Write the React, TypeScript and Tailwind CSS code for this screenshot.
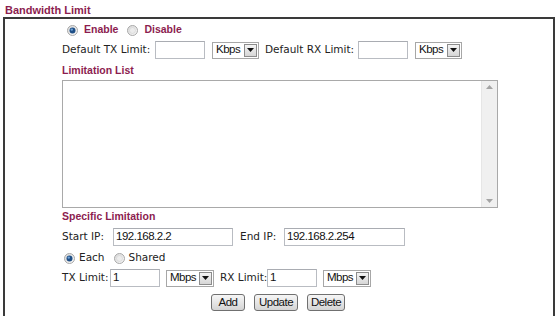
import React from "react";

const label = "shrink-0 whitespace-nowrap font-['DejaVu_Sans',sans-serif] text-[10.5px] text-[#222]";
const head = "shrink-0 whitespace-nowrap font-['Liberation_Sans',Arial,sans-serif] font-bold text-[10.5px] text-[#8c1d4f]";
const ctrl = "whitespace-nowrap font-['Liberation_Sans',Arial,sans-serif] text-[11.5px] tracking-[-0.5px] text-[#111]";

function Radio({ checked }: { checked?: boolean }) {
  return (
    <svg width="11" height="11" viewBox="0 0 11 11" className="shrink-0">
      <defs>
        <linearGradient id={checked ? "rg1" : "rg0"} x1="0" y1="0" x2="1" y2="1">
          <stop offset="0" stopColor="#d8d8d8" />
          <stop offset="1" stopColor="#fbfbfb" />
        </linearGradient>
      </defs>
      <circle cx="5.5" cy="5.5" r="5" fill={`url(#${checked ? "rg1" : "rg0"})`} stroke="#a8a8a8" />
      {checked ? (
        <>
          <circle cx="5.5" cy="5.5" r="3" fill="#1f4f86" />
          <circle cx="4.8" cy="4.6" r="1.2" fill="#6fa3d8" />
        </>
      ) : (
        <circle cx="5.5" cy="5.5" r="3" fill="#ececec" stroke="#d2d2d2" strokeWidth="0.6" />
      )}
    </svg>
  );
}

function TextBox({ w, value = "" }: { w: string; value?: string }) {
  return (
    <div className={`${w} h-[18px] shrink-0 border border-[#b9bcc2] border-t-[#a9acb2] bg-white pl-[2px] flex items-center ${ctrl}`}>
      {value}
    </div>
  );
}

function Select({ w, value }: { w: string; value: string }) {
  return (
    <div className={`${w} h-[17px] shrink-0 border border-[#a7a7a7] bg-white flex items-center justify-between pl-[3px] pr-[1px] ${ctrl}`}>
      <span>{value}</span>
      <div className="w-[13px] h-[13px] border border-[#8c8c8c] bg-gradient-to-b from-[#f4f4f4] to-[#d6d6d6] flex items-center justify-center">
        <svg width="7" height="4" viewBox="0 0 7 4">
          <path d="M0 0 H7 L3.5 4 Z" fill="#111" />
        </svg>
      </div>
    </div>
  );
}

function Button({ w, children }: { w: string; children: React.ReactNode }) {
  return (
    <div className={`${w} h-[17px] shrink-0 rounded-[3px] border border-[#707070] bg-gradient-to-b from-[#f6f6f6] via-[#e6e6e6] to-[#d4d4d4] flex items-center justify-center ${ctrl}`}>
      {children}
    </div>
  );
}

export default function App() {
  return (
    <div className="w-[560px] h-[316px] overflow-hidden bg-white">
      <div className={`h-[17px] pl-[5px] pt-[2px] ${head} text-[11px]`}>Bandwidth Limit</div>
      <div className="ml-[3px] w-[552px] h-[320px] border-2 border-[#3a3a3a] pt-[2px]">
        <div className="h-[18px] pl-[62px] flex items-center">
          <Radio checked />
          <span className={`ml-[6px] ${head}`}>Enable</span>
          <span className="ml-[9px] flex items-center">
            <Radio />
          </span>
          <span className={`ml-[6px] ${head}`}>Disable</span>
        </div>

        <div className="mt-[2px] h-[18px] pl-[57px] flex items-center">
          <span className={`w-[93px] ${label}`}>Default TX Limit:</span>
          <TextBox w="w-[50px]" />
          <div className="ml-[7px] shrink-0">
            <Select w="w-[47px]" value="Kbps" />
          </div>
          <span className={`ml-[6px] w-[93px] ${label}`}>Default RX Limit:</span>
          <TextBox w="w-[50px]" />
          <div className="ml-[7px] shrink-0">
            <Select w="w-[47px]" value="Kbps" />
          </div>
        </div>

        <div className={`mt-[4px] h-[16px] pl-[57px] flex items-center ${head}`}>Limitation List</div>

        <div className="mt-[1px] ml-[57px] w-[436px] h-[128px] border border-[#a9a9a9] bg-white flex justify-end">
          <div className="w-[16px] h-full bg-[#f0f0f0] border-l border-[#e6e6e6] flex flex-col items-center justify-between py-[4px]">
            <svg width="7" height="4" viewBox="0 0 7 4">
              <path d="M0 4 H7 L3.5 0 Z" fill="#a4a4a4" />
            </svg>
            <svg width="7" height="4" viewBox="0 0 7 4">
              <path d="M0 0 H7 L3.5 4 Z" fill="#a4a4a4" />
            </svg>
          </div>
        </div>

        <div className={`mt-[2px] h-[14px] pl-[57px] flex items-center ${head}`}>Specific Limitation</div>

        <div className="mt-[4px] h-[18px] pl-[57px] flex items-center">
          <span className={`w-[51px] ${label}`}>Start IP:</span>
          <TextBox w="w-[120px]" value="192.168.2.2" />
          <span className={`ml-[7px] w-[44px] ${label}`}>End IP:</span>
          <TextBox w="w-[121px]" value="192.168.2.254" />
        </div>

        <div className="mt-[4px] h-[16px] pl-[59px] flex items-center">
          <Radio checked />
          <span className={`ml-[4px] ${label}`}>Each</span>
          <span className="ml-[9px] flex items-center">
            <Radio />
          </span>
          <span className={`ml-[4px] ${label}`}>Shared</span>
        </div>

        <div className="mt-[3px] h-[18px] pl-[57px] flex items-center">
          <span className={`w-[48px] ${label}`}>TX Limit:</span>
          <TextBox w="w-[50px]" value="1" />
          <div className="ml-[6px] shrink-0">
            <Select w="w-[48px]" value="Mbps" />
          </div>
          <span className={`ml-[6px] w-[47px] ${label}`}>RX Limit:</span>
          <TextBox w="w-[50px]" value="1" />
          <div className="ml-[6px] shrink-0">
            <Select w="w-[48px]" value="Mbps" />
          </div>
        </div>

        <div className="mt-[7px] flex justify-center gap-[9px] pr-[2px]">
          <Button w="w-[34px]">Add</Button>
          <Button w="w-[44px]">Update</Button>
          <Button w="w-[38px]">Delete</Button>
        </div>
      </div>
    </div>
  );
}
